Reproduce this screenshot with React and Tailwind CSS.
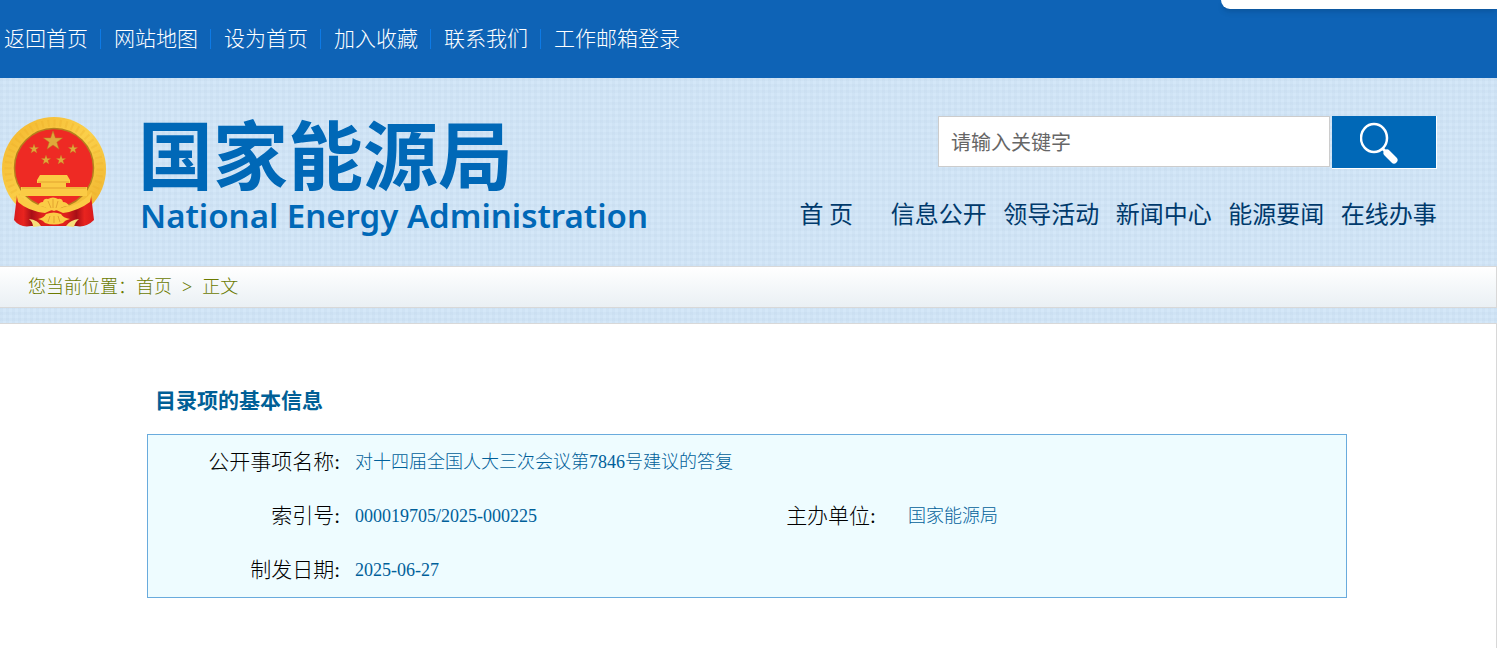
const topLinks = ['返回首页', '网站地图', '设为首页', '加入收藏', '联系我们', '工作邮箱登录']

const navLinks = ['首 页', '信息公开', '领导活动', '新闻中心', '能源要闻', '在线办事']

const STAR = 'M0 -10 L2.4 -3.1 L9.5 -3.1 L3.8 1.2 L5.9 8.1 L0 4 L-5.9 8.1 L-3.8 1.2 L-9.5 -3.1 L-2.4 -3.1 Z'

const stars = [
  { x: 53, y: 25, s: 1 },
  { x: 34, y: 33, s: 0.5 },
  { x: 73, y: 33, s: 0.5 },
  { x: 46, y: 44, s: 0.5 },
  { x: 61, y: 44, s: 0.5 },
]

function Emblem() {
  return (
    <svg viewBox="0 0 106 112" className="w-[106px] h-28 shrink-0" aria-hidden="true">
      <defs>
        <linearGradient id="gold" x1="0" y1="0" x2="1" y2="1">
          <stop offset="0" stopColor="#f3b52c" />
          <stop offset="0.5" stopColor="#fbd04a" />
          <stop offset="1" stopColor="#eeb02a" />
        </linearGradient>
        <linearGradient id="drape" x1="0" y1="0" x2="1" y2="0">
          <stop offset="0" stopColor="#d81a1c" />
          <stop offset="0.12" stopColor="#e8241f" />
          <stop offset="0.22" stopColor="#a80f16" />
          <stop offset="0.35" stopColor="#e0201c" />
          <stop offset="0.65" stopColor="#e0201c" />
          <stop offset="0.78" stopColor="#a80f16" />
          <stop offset="0.88" stopColor="#e8241f" />
          <stop offset="1" stopColor="#d81a1c" />
        </linearGradient>
      </defs>
      <ellipse cx="54" cy="53" rx="52" ry="52" fill="url(#gold)" />
      <ellipse cx="54" cy="53" rx="46" ry="46" fill="none" stroke="#e9a825" strokeWidth="7" strokeDasharray="2 4" opacity="0.25" />
      <circle cx="54" cy="52" r="39.5" fill="#ee2a24" stroke="#b5801d" strokeWidth="1.5" />
      {stars.map((star) => (
        <path
          key={`${star.x}-${star.y}`}
          d={STAR}
          fill="#dfa83a"
          stroke="#b98021"
          strokeWidth="0.5"
          transform={`translate(${star.x} ${star.y}) scale(${star.s})`}
        />
      ))}
      {/* Gate tower */}
      <path d="M40 59 H67 L70 64 V67 H66 V71 H87 V80 H21 V71 H41 V67 H37 V64 Z" fill="#fbcb45" />
      <path d="M38 66 H69 M22 72 H86" stroke="#e3a331" strokeWidth="1" />
      {/* Ribbon */}
      <path d="M17 79 Q24 90 46 94 H62 Q83 90 91 79 L94 104 Q86 112 76 110 H31 Q20 112 14 104 Z" fill="url(#drape)" />
      <path d="M16 76 Q28 90 46 92 L54 95 L62 92 Q80 90 92 76 L90 86 Q78 95 63 97 L54 93 L45 97 Q28 95 18 86 Z" fill="#fbcb45" />
      <path d="M38 90 Q39 86 43 86 Q44 82 48 83 Q53 80 58 83 Q62 82 63 86 Q67 86 69 90 Q62 90 58 94 H49 Q45 90 38 90 Z" fill="#fbcb45" />
      <path d="M48 85 L51 92 M53 83 V92 M58 85 L56 92" stroke="#e3a331" strokeWidth="1" />
      <path d="M38 103 Q44 102 46 98 Q54 95 61 98 Q63 102 70 103 Q65 104 63 107 Q54 110 45 107 Q43 104 38 103 Z" fill="#fbcb45" />
      <path d="M50 100 L48 106 M54 100 V107 M58 100 L60 106" stroke="#e3a331" strokeWidth="1" />
      <path d="M29 103 Q38 104 41 110 L33 111 Q33 106 29 103 Z M79 103 Q70 104 66 110 L74 111 Q75 106 79 103 Z" fill="#f6df7a" />
    </svg>
  )
}

function SearchIcon() {
  return (
    <svg viewBox="0 0 40 44" className="w-10 h-11" fill="none" stroke="white" aria-hidden="true">
      <ellipse cx="14" cy="18" rx="13" ry="14" strokeWidth="2.5" />
      <path d="M22 28 L26 32" strokeWidth="3" />
      <path d="M27 33 L34 40" strokeWidth="7" strokeLinecap="round" />
    </svg>
  )
}

function Label({ children }) {
  return (
    <th scope="row" className="p-0 pr-1 text-right font-light text-[21px] text-black whitespace-nowrap">
      {children}
    </th>
  )
}

function App() {
  return (
    <div className="relative min-h-screen flex flex-col overflow-x-hidden bg-white font-['Liberation_Serif','Noto_Sans_CJK_SC',serif]">
      {/* Top bar */}
      <div className="bg-[#0e63b6] h-[78px] flex items-center px-1">
        <ul className="flex">
          {topLinks.map((link, i) => (
            <li key={link} className="flex items-center">
              {i > 0 && <span className="w-px h-5 ml-3 mr-[13px] bg-[#0d7ae6]" />}
              <a href="#" className="text-[21px] leading-6 font-light text-white">{link}</a>
            </li>
          ))}
        </ul>
      </div>
      <div className="absolute top-0 right-0 w-[276px] h-[9px] bg-white rounded-bl-[10px] shadow-md" />

      <div className="bg-[#d4e7f8] bg-[linear-gradient(90deg,#b4cde228_50%,transparent_50%),linear-gradient(#b4cde228_50%,transparent_50%)] bg-size-[6px_6px]">
        {/* Header */}
        <header className="h-[188px] flex justify-between pr-[52px]">
          <a href="#" className="flex pt-[38px]">
            <Emblem />
            <span className="pl-8 font-['Noto_Sans_CJK_SC',sans-serif] text-[#0068b7]">
              <span className="block font-bold text-[75px] leading-[72px]">国家能源局</span>
              <span className="block pl-0.5 pt-2 font-['Noto_Sans',sans-serif] font-semibold text-[33px] leading-10">National Energy Administration</span>
            </span>
          </a>
          <div className="pt-[38px] font-['Noto_Sans_CJK_SC',sans-serif]">
            <form className="flex justify-end items-start gap-0.5 pr-2" onSubmit={(e) => e.preventDefault()}>
              <input
                type="text"
                aria-label="请输入关键字"
                placeholder="请输入关键字"
                className="w-[392px] h-[51px] px-3 bg-white border border-[#ccc] text-xl placeholder:text-[#666]"
              />
              <button type="submit" aria-label="搜索" className="w-[105px] h-[53px] flex items-center justify-center pr-2 bg-[#0068b7] border-r border-b border-white">
                <SearchIcon />
              </button>
            </form>
            <nav className="grid grid-cols-6 w-[675px] pt-[26px]">
              {navLinks.map((link) => (
                <a key={link} href="#" className="text-center text-2xl leading-9 text-[#003a6c]">{link}</a>
              ))}
            </nav>
          </div>
        </header>

        {/* Breadcrumb */}
        <div className="h-[42px] flex items-center px-7 border-y border-r border-[#d8d8d8] bg-linear-to-b from-white to-[#eaf0f4] text-lg font-light text-[#6b7a00]">
          您当前位置：
          <a href="#">首页</a>
          <span className="px-2.5">&gt;</span>
          <span>正文</span>
        </div>
        <div className="h-[15px]" />
      </div>

      <main className="flex-1 border-t border-r border-[#d8d8d8] bg-white pr-0.5">
        <div className="max-w-[1200px] mx-auto pt-[63px]">
          <h2 className="px-2 pb-[19px] text-[21px] leading-7 font-bold text-[#005f96]">目录项的基本信息</h2>
          <table className="w-full table-fixed border-separate border-spacing-0 bg-[#eefcff] border border-[#69abdd]">
            <colgroup>
              <col className="w-[196px]" />
              <col />
              <col className="w-[100px]" />
              <col className="w-[466px]" />
            </colgroup>
            <tbody className="text-lg font-light text-[#00609a]">
              <tr className="h-[54px]">
                <Label>公开事项名称:</Label>
                <td className="p-0 pl-[11px]" colSpan={3}>对十四届全国人大三次会议第7846号建议的答复</td>
              </tr>
              <tr className="h-[54px]">
                <Label>索引号:</Label>
                <td className="p-0 pl-[11px]">000019705/2025-000225</td>
                <Label>主办单位:</Label>
                <td className="p-0 pl-7">国家能源局</td>
              </tr>
              <tr className="h-[54px]">
                <Label>制发日期:</Label>
                <td className="p-0 pl-[11px]" colSpan={3}>2025-06-27</td>
              </tr>
            </tbody>
          </table>
        </div>
      </main>
    </div>
  )
}

export default App
